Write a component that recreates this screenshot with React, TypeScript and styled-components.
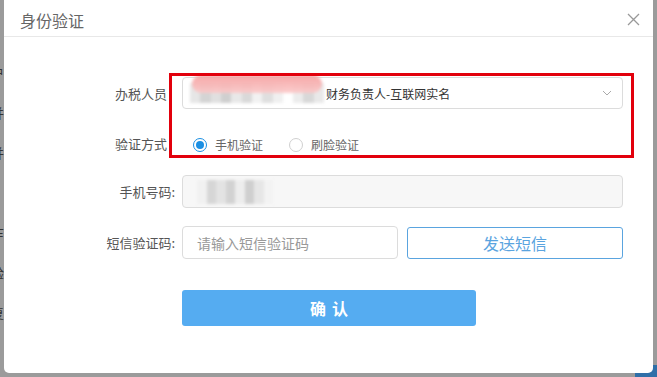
import React from "react";
import styled, { createGlobalStyle } from "styled-components";

const GlobalStyle = createGlobalStyle`
  html, body {
    margin: 0;
    padding: 0;
    background: #9b9b9b;
    font-family: "Noto Sans CJK SC", "Noto Sans", sans-serif;
  }
`;

const Page = styled.div`
  position: relative;
  width: 657px;
  height: 377px;
  overflow: hidden;
  background: #9b9b9b;
`;

const BackText = styled.div`
  position: absolute;
  left: -9px;
  top: 66px;
  display: flex;
  flex-direction: column;
  gap: 26px;
  font-size: 13px;
  color: #333;
  line-height: 14px;
`;

const BackPatch = styled.div`
  position: absolute;
  right: 0;
  bottom: 0;
  width: 22px;
  height: 12px;
  background: #2f6fa8;
`;

const Modal = styled.div`
  position: relative;
  margin-left: 4px;
  width: 649px;
  height: 373px;
  background: #fff;
  border-radius: 0 0 5px 5px;
  display: flex;
  flex-direction: column;
`;

const Header = styled.div`
  height: 36px;
  display: flex;
  align-items: center;
  justify-content: space-between;
  padding: 0 16px 0 16px;
  border-bottom: 1px solid #e8e8e8;
`;

const Title = styled.span`
  font-size: 16px;
  color: #666;
  margin-top: 4px;
`;

const Close = styled.button`
  border: 0;
  background: none;
  padding: 0;
  width: 14px;
  height: 14px;
  margin-right: -4px;
  margin-top: 4px;
  display: flex;
  cursor: pointer;
`;

const Body = styled.div`
  display: flex;
  flex-direction: column;
`;

const Row = styled.div<{ $mt: number }>`
  display: flex;
  align-items: center;
  min-height: 32px;
  margin-top: ${(p) => p.$mt}px;
`;

const Label = styled.label<{ $pr: number }>`
  width: 178px;
  box-sizing: border-box;
  text-align: right;
  padding-right: ${(p) => p.$pr}px;
  font-size: 13px;
  color: #555;
`;

const Select = styled.div`
  position: relative;
  width: 441px;
  height: 32px;
  box-sizing: border-box;
  border: 1px solid #dcdcdc;
  border-radius: 4px;
  display: flex;
  align-items: center;
  padding: 0 10px 0 7px;
  font-size: 12px;
  color: #333;
`;

const SelectText = styled.span`
  flex: 1;
  margin-left: 2px;
`;

const Mosaic = styled.span<{ $w: number; $h: number; $pink?: boolean }>`
  position: relative;
  display: inline-flex;
  width: ${(p) => p.$w}px;
  height: ${(p) => p.$h}px;
  filter: blur(1.5px);
  &::before {
    content: "";
    display: ${(p) => (p.$pink ? "block" : "none")};
    position: absolute;
    left: 2px;
    right: 2px;
    top: -8px;
    height: 18px;
    border-radius: 9px;
    background: linear-gradient(#f59c9c, #fbc9c9);
    opacity: 0.9;
  }
`;

const Cell = styled.span<{ $c: string }>`
  flex: 1;
  background: ${(p) => p.$c};
`;

const RadioGroup = styled.div`
  display: flex;
  align-items: center;
  gap: 26px;
  padding-left: 11px;
  padding-top: 3px;
`;

const RadioItem = styled.label`
  display: flex;
  align-items: center;
  gap: 8px;
  font-size: 12px;
  color: #666;
`;

const RadioDot = styled.span<{ $on?: boolean }>`
  width: 14px;
  height: 14px;
  box-sizing: border-box;
  border-radius: 50%;
  border: 1px solid ${(p) => (p.$on ? "#1a8fe3" : "#d0d0d0")};
  display: flex;
  align-items: center;
  justify-content: center;
  &::after {
    content: "";
    display: ${(p) => (p.$on ? "block" : "none")};
    width: 8px;
    height: 8px;
    border-radius: 50%;
    background: #1a8fe3;
  }
`;

const Input = styled.div<{ $w: number; $disabled?: boolean }>`
  width: ${(p) => p.$w}px;
  height: 33px;
  box-sizing: border-box;
  border: 1px solid #dcdcdc;
  border-radius: 4px;
  background: ${(p) => (p.$disabled ? "#f7f7f7" : "#fff")};
  display: flex;
  align-items: center;
  padding: 0 14px;
  font-size: 14px;
  color: #999;
`;

const SendButton = styled.button`
  margin-left: 9px;
  width: 216px;
  height: 32px;
  box-sizing: border-box;
  border: 1px solid #5aa4df;
  border-radius: 3px;
  background: #fff;
  color: #5aa4df;
  font-family: inherit;
  font-size: 16px;
  padding: 0;
`;

const Confirm = styled.button`
  margin: 31px 0 0 178px;
  width: 294px;
  height: 36px;
  border: 0;
  border-radius: 3px;
  background: #55acf1;
  color: #fff;
  font-family: inherit;
  font-size: 16px;
  font-weight: bold;
  letter-spacing: 6px;
  padding: 0 0 0 6px;
`;

const RedMark = styled.div`
  position: absolute;
  left: 165px;
  top: 73px;
  width: 465px;
  height: 85px;
  box-sizing: border-box;
  border: 3px solid #e2000c;
  pointer-events: none;
`;

const nameCells = ["#e6e6e6", "#d4d4d4", "#e0e0e0", "#cfcfcf", "#e8e8e8", "#d9d9d9", "#f2f2f2", "#dfdfdf", "#f0f0f0", "#ffffff", "#ececec", "#d8d8d8", "#e9e9e9"];
const phoneCells = ["#f1f1f1", "#d6d6d6", "#e3e3e3", "#d2d2d2", "#ededed", "#cfcfcf", "#e6e6e6", "#f3f3f3"];

const Chevron = () => (
  <svg width="10" height="6" viewBox="0 0 10 6">
    <path d="M1 1l4 4 4-4" fill="none" stroke="#aaa" strokeWidth="1" />
  </svg>
);

const App = () => {
  return (
    <Page>
      <GlobalStyle />
      <BackText>
        <span>户</span>
        <span>并</span>
        <span>并</span>
        <span>·</span>
        <span>乍</span>
        <span>验</span>
        <span>复</span>
      </BackText>
      <BackPatch />
      <Modal>
        <Header>
          <Title>身份验证</Title>
          <Close aria-label="关闭">
            <svg width="13" height="13" viewBox="0 0 13 13">
              <path d="M1 1l11 11M12 1L1 12" stroke="#999" strokeWidth="1.3" />
            </svg>
          </Close>
        </Header>
        <Body>
          <Row $mt={40}>
            <Label $pr={15}>办税人员</Label>
            <Select>
              <Mosaic $w={134} $h={20} $pink>
                {nameCells.map((c, i) => (
                  <Cell key={i} $c={c} />
                ))}
              </Mosaic>
              <SelectText>财务负责人-互联网实名</SelectText>
              <Chevron />
            </Select>
          </Row>
          <Row $mt={18}>
            <Label $pr={15}>验证方式</Label>
            <RadioGroup>
              <RadioItem>
                <RadioDot $on />
                手机验证
              </RadioItem>
              <RadioItem>
                <RadioDot />
                刷脸验证
              </RadioItem>
            </RadioGroup>
          </Row>
          <Row $mt={16}>
            <Label $pr={7}>手机号码:</Label>
            <Input $w={441} $disabled>
              <Mosaic $w={76} $h={24}>
                {phoneCells.map((c, i) => (
                  <Cell key={i} $c={c} />
                ))}
              </Mosaic>
            </Input>
          </Row>
          <Row $mt={18}>
            <Label $pr={7}>短信验证码:</Label>
            <Input $w={216}>请输入短信验证码</Input>
            <SendButton>发送短信</SendButton>
          </Row>
          <Confirm>确认</Confirm>
        </Body>
        <RedMark />
      </Modal>
    </Page>
  );
};

export default App;
